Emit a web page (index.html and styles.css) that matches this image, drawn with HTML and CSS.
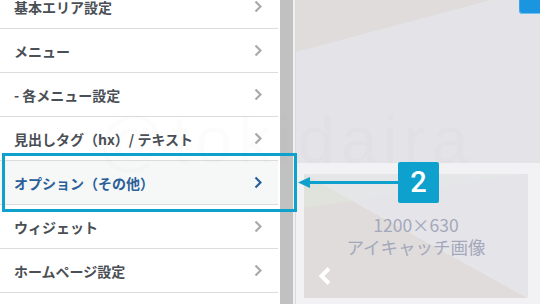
FILE: index.html
```html
<!DOCTYPE html>
<html lang="ja">
<head>
<meta charset="utf-8">
<title>Customizer</title>
<link rel="stylesheet" href="styles.css">
</head>
<body>
<div class="app">
  <aside class="sidebar">
    <ul class="menu">
      <li class="item"><span>基本エリア設定</span><svg class="chev" viewBox="0 0 8 13" width="8" height="13"><polyline points="1.5,1.5 6.5,6.5 1.5,11.5"/></svg></li>
      <li class="item"><span>メニュー</span><svg class="chev" viewBox="0 0 8 13" width="8" height="13"><polyline points="1.5,1.5 6.5,6.5 1.5,11.5"/></svg></li>
      <li class="item"><span>- 各メニュー設定</span><svg class="chev" viewBox="0 0 8 13" width="8" height="13"><polyline points="1.5,1.5 6.5,6.5 1.5,11.5"/></svg></li>
      <li class="item"><span>見出しタグ（hx）/ テキスト</span><svg class="chev" viewBox="0 0 8 13" width="8" height="13"><polyline points="1.5,1.5 6.5,6.5 1.5,11.5"/></svg></li>
      <li class="item active"><span>オプション（その他）</span><svg class="chev" viewBox="0 0 8 13" width="8" height="13"><polyline points="1.5,1.5 6.5,6.5 1.5,11.5"/></svg></li>
      <li class="item"><span>ウィジェット</span><svg class="chev" viewBox="0 0 8 13" width="8" height="13"><polyline points="1.5,1.5 6.5,6.5 1.5,11.5"/></svg></li>
      <li class="item"><span>ホームページ設定</span><svg class="chev" viewBox="0 0 8 13" width="8" height="13"><polyline points="1.5,1.5 6.5,6.5 1.5,11.5"/></svg></li>
      <li class="item"></li>
    </ul>
  </aside>
  <div class="scrollbar"></div>
  <div class="gutter"></div>
  <main class="preview">
    <div class="hero">
      <span class="blue-btn"></span>
    </div>
    <div class="card">
      <div class="thumb">
        <svg class="thumb-art" viewBox="0 0 224 124" preserveAspectRatio="none">
          <polygon points="0,0 224,124 0,124" fill="#dfdcdb"/>
          <polygon points="0,0 224,0 224,124" fill="#e4e4e9"/>
          <polygon points="0,0 48.2,26.7 0,34" fill="#e0e2dc"/>
          <polygon points="0,0 224,0 48.2,26.7" fill="#e5e6e8"/>
        </svg>
        <span class="thumb-text">1200×630</span>
        <span class="thumb-text">アイキャッチ画像</span>
        <svg class="thumb-prev" viewBox="0 0 14 20" width="14" height="20"><polyline points="11,2.5 3.5,10 11,17.5"/></svg>
      </div>
    </div>
  </main>
  <div class="watermark">@tokidaira</div>
  <div class="callout-box"></div>
  <svg class="callout-arrow" viewBox="0 0 102 13" width="102" height="13">
    <line x1="11" y1="6.5" x2="102" y2="6.5"/>
    <polygon points="1,6.5 13,1 13,12"/>
  </svg>
  <div class="callout-badge">2</div>
</div>
</body>
</html>
```

FILE: styles.css
```css
html, body {
  margin: 0;
  padding: 0;
}
body {
  width: 540px;
  height: 304px;
  overflow: hidden;
  background: #fff;
  font-family: "Noto Sans CJK JP", "Noto Sans", sans-serif;
}
.app {
  position: relative;
  display: flex;
  width: 540px;
  height: 304px;
  overflow: hidden;
}
.sidebar {
  width: 280px;
  flex: none;
  background: #fff;
  overflow: hidden;
}
.menu {
  list-style: none;
  margin: -15px 0 0 0;
  padding: 0;
}
.item {
  box-sizing: border-box;
  height: 44px;
  margin-right: 2px;
  border-bottom: 1px solid #dcdcde;
  display: flex;
  align-items: center;
  justify-content: space-between;
  padding: 0 16px 0 14px;
  font-size: 14px;
  font-weight: 700;
  line-height: 20px;
  color: #4a4f55;
}
.item span {
  margin-top: 0;
}
.chev {
  flex: none;
}
.chev polyline {
  fill: none;
  stroke: #a7aaad;
  stroke-width: 2.2;
}
.item.active {
  background: #f6f7f7;
  color: #2b5f98;
}
.item.active .chev polyline {
  stroke: #2b5f98;
}
.scrollbar {
  width: 13px;
  flex: none;
  background: #c1c1c1;
}
.gutter {
  width: 2px;
  flex: none;
  background: #f0f0f1;
  border-right: 1px solid #dadade;
}
.preview {
  flex: 1;
  display: flex;
  flex-direction: column;
  background: #e4e4e8;
}
.hero {
  position: relative;
  height: 163px;
  flex: none;
  display: flex;
  justify-content: flex-end;
  align-items: flex-start;
  background: #e4e4e8;
}
.hero::before {
  content: "";
  position: absolute;
  left: 0;
  top: 0;
  width: 195px;
  height: 52px;
  background: #dfdcdb;
  clip-path: polygon(0 0, 100% 0, 0 100%);
}
.blue-btn {
  position: relative;
  display: block;
  width: 21px;
  height: 14px;
  background: #1b95e0;
  border-bottom-left-radius: 4px;
  box-shadow: inset 0 -1px 0 #6dc0f0, inset 1px 0 0 #3aa6e8;
}
.card {
  flex: 1;
  background: #f2f2f4;
  padding: 11px 12px 0 8px;
}
.thumb {
  position: relative;
  height: 124px;
  display: flex;
  flex-direction: column;
  align-items: center;
  justify-content: center;
  overflow: hidden;
}
.thumb-art {
  position: absolute;
  left: 0;
  top: 0;
  width: 100%;
  height: 100%;
}
.thumb-text {
  position: relative;
  font-size: 17.5px;
  font-weight: 400;
  line-height: 22px;
  color: #a4a8bb;
}
.thumb-prev {
  position: absolute;
  left: 14px;
  top: 92px;
}
.thumb-prev polyline {
  fill: none;
  stroke: #fff;
  stroke-width: 4;
}
.watermark {
  position: absolute;
  left: 98px;
  top: 102px;
  font-family: "Liberation Sans", sans-serif;
  font-size: 66px;
  letter-spacing: 6px;
  color: rgba(120, 120, 130, 0.025);
  pointer-events: none;
  white-space: nowrap;
}
.callout-box {
  position: absolute;
  left: 2px;
  top: 153px;
  width: 295px;
  height: 59px;
  box-sizing: border-box;
  border: 3px solid #0ea1cd;
}
.callout-arrow {
  position: absolute;
  left: 297px;
  top: 176px;
}
.callout-arrow line {
  stroke: #0ea1cd;
  stroke-width: 3;
}
.callout-arrow polygon {
  fill: #0ea1cd;
}
.callout-badge {
  position: absolute;
  left: 398px;
  top: 162px;
  width: 41px;
  height: 41px;
  border-radius: 2px;
  background: #0ea1cd;
  color: #fff;
  font-family: Roboto, "Liberation Sans", sans-serif;
  font-weight: 500;
  font-size: 29px;
  line-height: 41px;
  text-align: center;
}
```
